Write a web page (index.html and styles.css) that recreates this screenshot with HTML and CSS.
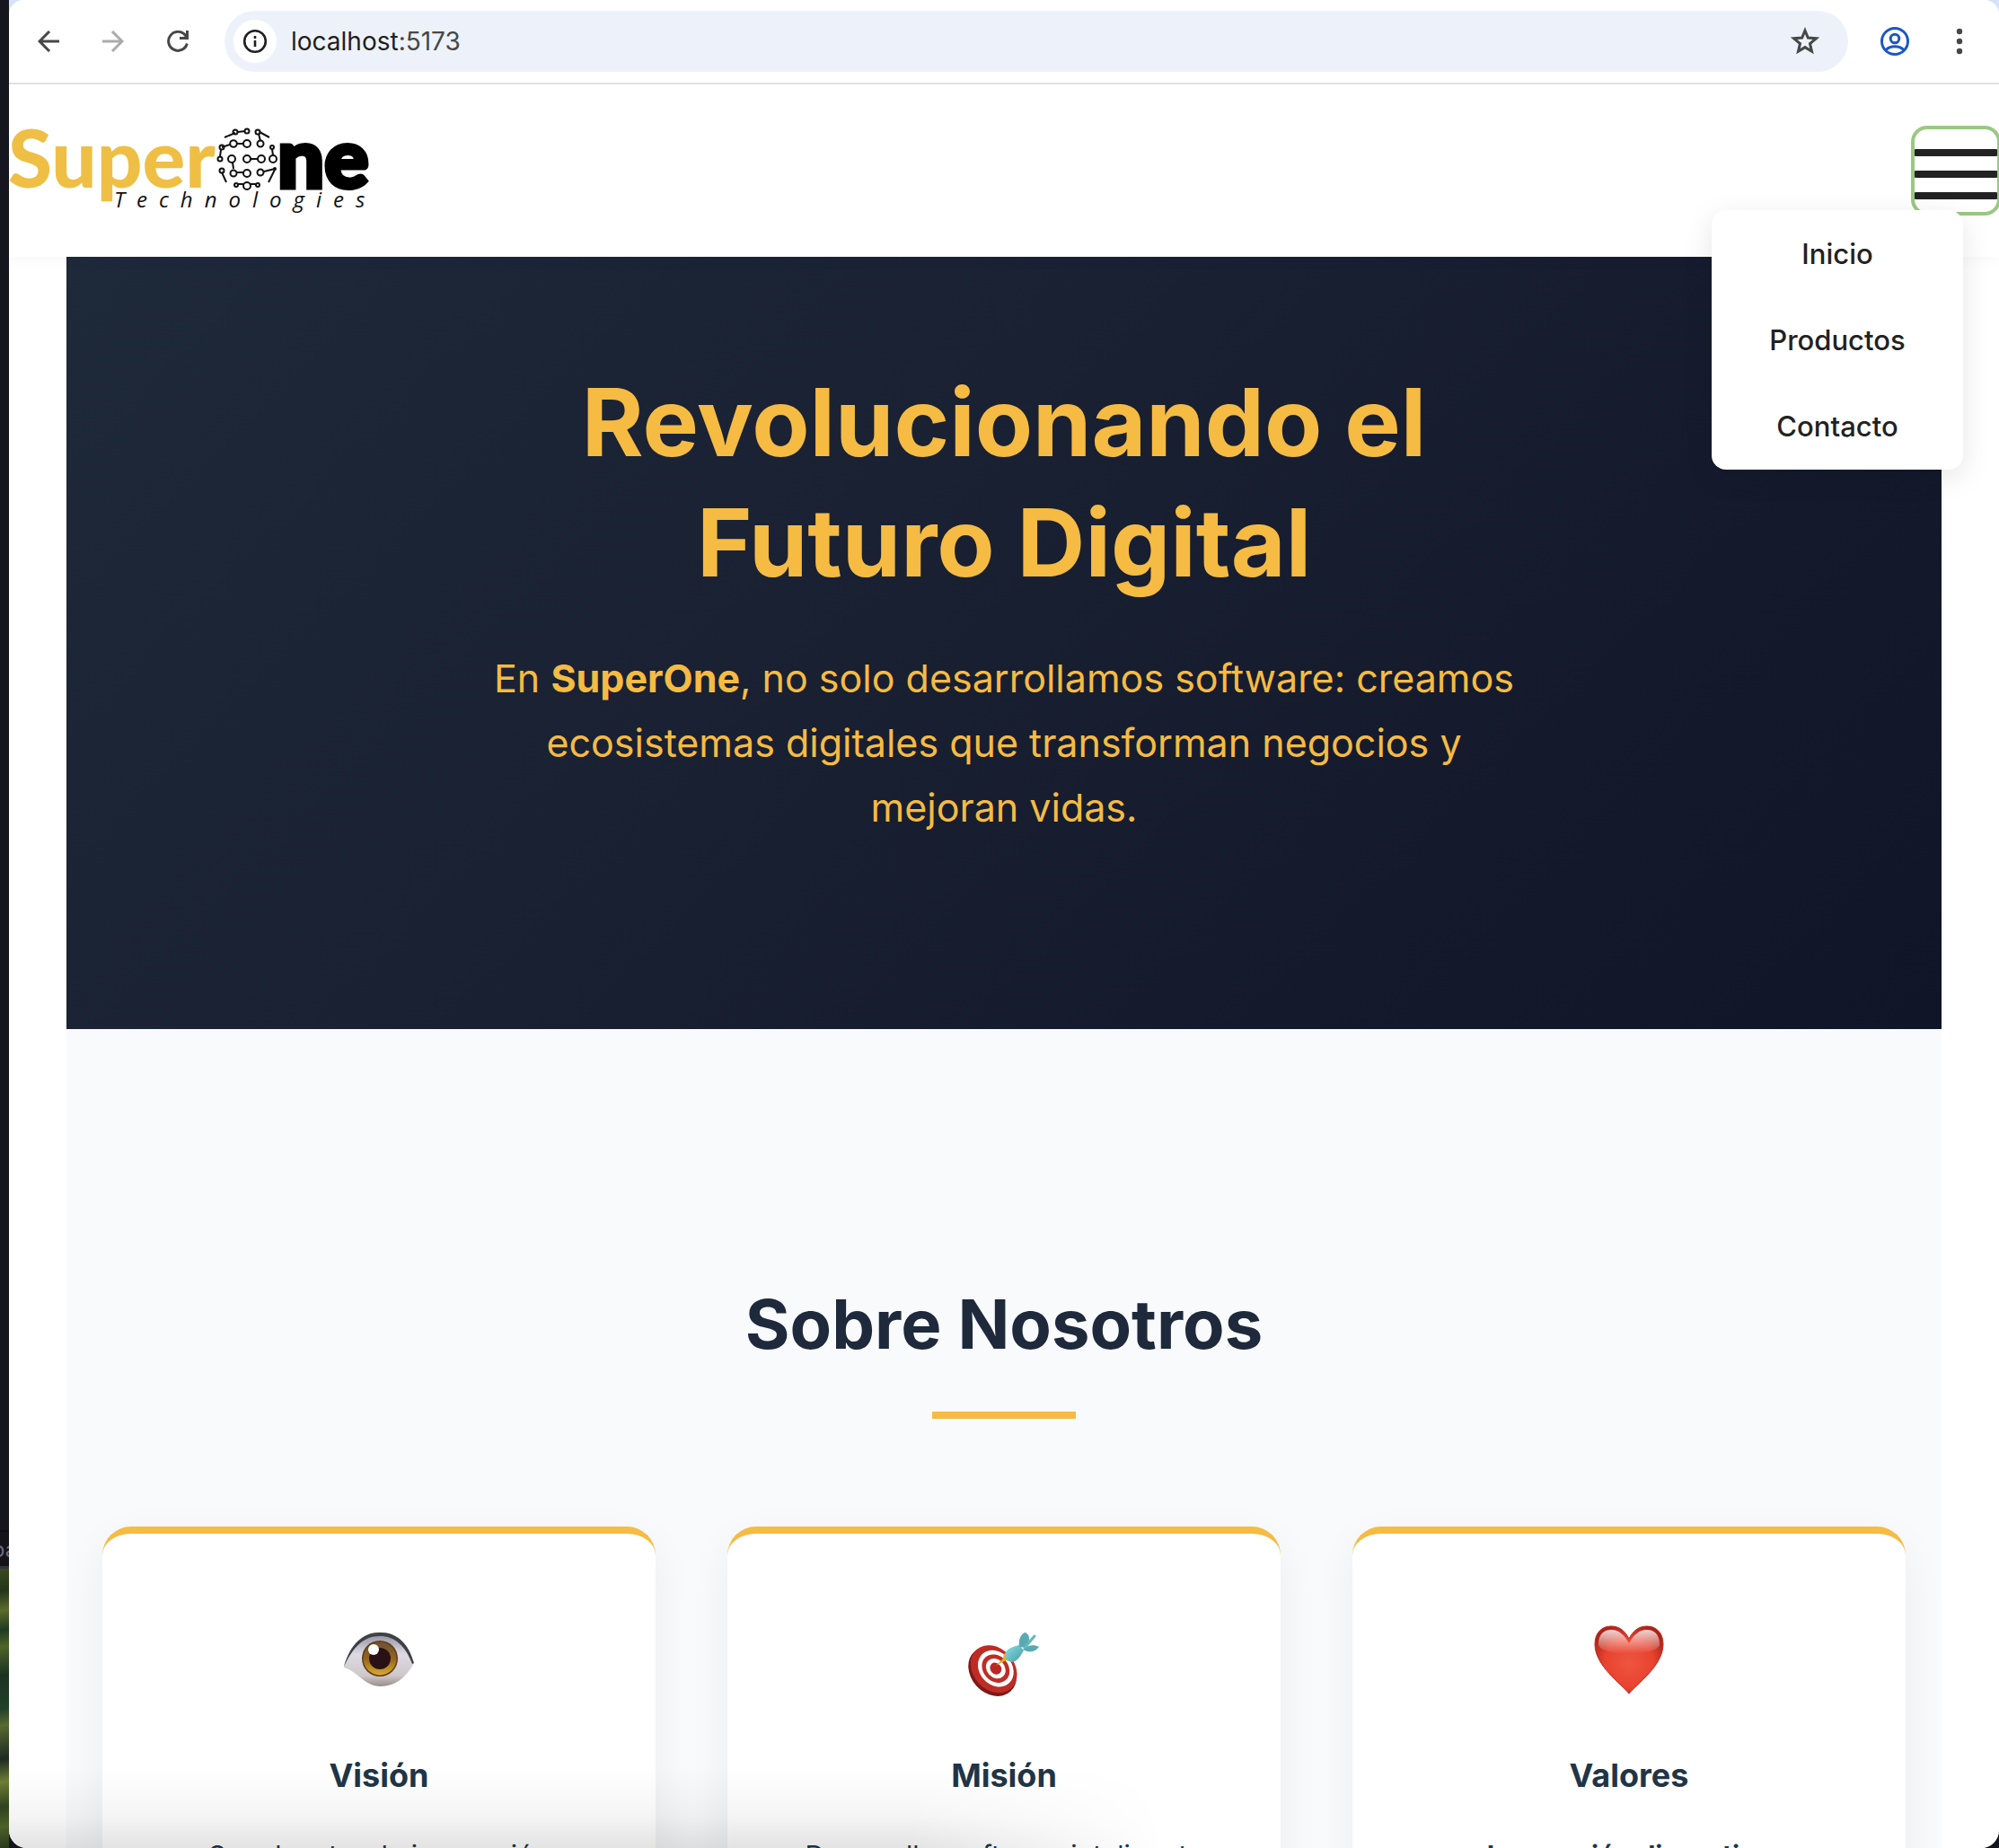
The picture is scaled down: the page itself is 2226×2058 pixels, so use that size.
FILE: index.html
```html
<!DOCTYPE html>
<html lang="es">
<head>
<meta charset="utf-8">
<title>SuperOne Technologies</title>
<link rel="stylesheet" href="styles.css">
</head>
<body>
<div class="desktop">
  <aside class="behind">
    <div class="behind-editor"></div>
    <div class="behind-tab"><span>pa</span></div>
    <div class="behind-photo"></div>
  </aside>
  <div class="window">
    <div class="toolbar">
      <button class="tool" type="button" aria-label="Atrás">
        <svg width="24" height="24" viewBox="0 0 24 24" fill="none" stroke="#474747" stroke-width="3"><path d="M24 12H2M13 1 2 12l11 11"/></svg>
      </button>
      <button class="tool" type="button" aria-label="Adelante">
        <svg width="24" height="24" viewBox="0 0 24 24" fill="none" stroke="#ababab" stroke-width="3"><path d="M0 12h22M11 1l11 11-11 11"/></svg>
      </button>
      <button class="tool" type="button" aria-label="Recargar">
        <svg width="24" height="24" viewBox="0 0 24 24" fill="none" stroke="#474747" stroke-width="3"><path d="M22.300 14.500A10.500 10.500 0 1 1 20.500 5.500L22.500 8.500M22.500 0v9M14 8.500h10"/></svg>
      </button>
      <div class="omnibox">
        <button class="site-info" type="button" aria-label="Información del sitio">
          <svg width="28" height="28" viewBox="0 0 28 28" fill="none" stroke="#1f1f1f" stroke-width="2.600"><circle cx="14" cy="14" r="11.800"/><path d="M14 13v7M14 8v3"/></svg>
        </button>
        <span class="address">localhost<span class="port">:5173</span></span>
        <button class="bookmark" type="button" aria-label="Añadir a marcadores">
          <svg width="32" height="32" viewBox="0 0 32 32" fill="none" stroke="#474747" stroke-width="3"><path d="M16 4l3.300 8 9 .8-6.800 5.700 2 8.700-7.500-4.600-7.500 4.600 2-8.700-6.800-5.700 9-.8z"/></svg>
        </button>
      </div>
      <button class="tool" type="button" aria-label="Perfil">
        <svg width="32" height="32" viewBox="0 0 32 32" fill="none" stroke="#1b57c4" stroke-width="3"><circle cx="16" cy="16" r="14.500"/><circle cx="16" cy="13" r="4.800"/><path d="M6 25.500c5.500-5 14.500-5 20 0"/></svg>
      </button>
      <button class="tool" type="button" aria-label="Menú del navegador">
        <svg width="8" height="32" viewBox="0 0 8 32" fill="#474747"><circle cx="4" cy="5" r="3.200"/><circle cx="4" cy="16" r="3.200"/><circle cx="4" cy="27" r="3.200"/></svg>
      </button>
    </div>

    <div class="page">
      <header class="site-header">
        <a class="brand" href="#inicio" aria-label="SuperOne Technologies">
          <svg width="404" height="104" viewBox="0 0 404 104">
            <text class="logo-super" x="-1" y="71">Super</text>
            <text class="logo-ne" x="299" y="71">ne</text>
            <text class="logo-tech" x="117" y="93">Technologies</text>
            <g fill="none" stroke="#111" stroke-width="2" transform="translate(0 -2)">
              <path d="M240 17l12-5M255 11l8-1M279 11l11 6M278 13l2 8M237 28l9-3M254 24h7M293 30l1 7M236 31l-1 7M269 41h8M249 45l1 7M254 56h7M237 56l5 11M284 55l12-3M296 53l-7 14M255 69h6M269 69h6"/>
              <circle cx="252" cy="11" r="2.500"/><circle cx="265" cy="10" r="2.500"/><circle cx="277" cy="11" r="2.500"/>
              <circle cx="250" cy="24" r="3.800"/><circle cx="265" cy="24" r="4"/><circle cx="280" cy="24" r="3.500"/>
              <circle cx="237" cy="28" r="2.500"/><circle cx="293" cy="28" r="2"/>
              <circle cx="235" cy="41" r="2.500"/><circle cx="248" cy="41" r="4"/><circle cx="265" cy="41" r="4"/><circle cx="281" cy="41" r="4"/><circle cx="294" cy="41" r="4"/>
              <circle cx="237" cy="54" r="2.500"/><circle cx="250" cy="57" r="3.500"/><circle cx="265" cy="57" r="4"/><circle cx="280" cy="56" r="3.500"/><circle cx="296" cy="52" r="1"/>
              <circle cx="253" cy="70" r="2"/><circle cx="265" cy="71" r="4"/><circle cx="277" cy="70" r="2"/>
            </g>
          </svg>
        </a>
        <button class="burger" type="button" aria-label="Abrir menú" aria-expanded="true">
          <span></span><span></span><span></span>
        </button>
        <nav class="menu">
          <a href="#inicio">Inicio</a>
          <a href="#productos">Productos</a>
          <a href="#contacto">Contacto</a>
        </nav>
      </header>

      <main class="content">
        <section class="hero" id="inicio">
          <h1>Revolucionando el Futuro Digital</h1>
          <p>En <strong>SuperOne</strong>, no solo desarrollamos software: creamos ecosistemas digitales que transforman negocios y mejoran vidas.</p>
        </section>
        <section class="about">
          <h2>Sobre Nosotros</h2>
          <div class="cards">
            <article class="card">
              <svg class="card-icon" width="80" height="80" viewBox="0 0 80 80">
                <defs>
                  <linearGradient id="sclera" x1="0" y1="0" x2="0" y2="1"><stop offset="0" stop-color="#8d8a9c"/><stop offset=".4" stop-color="#dedae4"/><stop offset=".8" stop-color="#cfc8ca"/><stop offset="1" stop-color="#978c8c"/></linearGradient>
                  <linearGradient id="iris" x1="0" y1="0" x2="0" y2="1"><stop offset="0" stop-color="#705035"/><stop offset=".5" stop-color="#94631d"/><stop offset="1" stop-color="#d9ac2c"/></linearGradient>
                </defs>
                <path d="M1 46C8 24 20 9 41 9c20 0 32 13 38 34-9 17-22 26-37 26C24 69 16 52 1 48z" fill="url(#sclera)"/>
                <path d="M1 47C8 22 22 9 41 9c20 0 32 13 38 34l-2 1C69 23 57 13 41 13 22 13 11 26 1 47z" fill="#3f4244"/>
                <circle cx="41" cy="38" r="20" fill="#5f3d16"/><circle cx="41" cy="38" r="18.500" fill="url(#iris)"/>
                <circle cx="41" cy="38" r="12" fill="#2a1115"/><circle cx="34" cy="28" r="6" fill="#fff"/>
              </svg>
              <h3>Visión</h3>
              <p>Ser el motor de innovación</p>
            </article>
            <article class="card">
              <svg class="card-icon" width="80" height="80" viewBox="0 0 80 80">
                <defs><linearGradient id="dart" x1="0" y1="0" x2="1" y2="1"><stop offset="0" stop-color="#8fe0e6"/><stop offset="1" stop-color="#3f9aa5"/></linearGradient></defs>
                <g transform="rotate(48 28 49)">
                  <ellipse cx="30" cy="52" rx="30" ry="24" fill="#7d1a17"/>
                  <ellipse cx="29" cy="49" rx="29" ry="23" fill="#bf2c26"/>
                  <ellipse cx="30" cy="47" rx="22" ry="18" fill="#fff"/>
                  <ellipse cx="30" cy="47" rx="17" ry="14" fill="#bf2c26"/>
                  <ellipse cx="30" cy="47" rx="12" ry="10" fill="#fff"/>
                  <ellipse cx="30" cy="47" rx="7" ry="6" fill="#b92823"/>
                </g>
                <path d="M31 46l8-8 1-6 4 4 4 5-6-1z" fill="#e0b326"/>
                <path d="M41 33c2-6 8-8 16-10l5 6c-4 7-8 13-14 13-4-1-7-5-7-9z" fill="url(#dart)"/>
                <path d="M57 25c-1-9 2-15 7-16 6 4 5 10 0 17zM61 28c5-5 12-6 18-3-4 6-11 7-18 3z" fill="#58aab2"/>
                <path d="M63 26L74 13" stroke="#65b6bd" stroke-width="3" stroke-linecap="round"/>
              </svg>
              <h3>Misión</h3>
              <p>Desarrollar software inteligente</p>
            </article>
            <article class="card">
              <svg class="card-icon" width="80" height="80" viewBox="0 0 80 80">
                <defs>
                  <radialGradient id="heart" cx=".5" cy=".55" r=".6"><stop offset="0" stop-color="#ee5540"/><stop offset=".6" stop-color="#e8432f"/><stop offset="1" stop-color="#a9231a"/></radialGradient>
                  <linearGradient id="shine" x1="0" y1="0" x2="0" y2="1"><stop offset="0" stop-color="#fff" stop-opacity=".8"/><stop offset="1" stop-color="#fff" stop-opacity="0"/></linearGradient>
                </defs>
                <path d="M40 77C31 66 2 46 2 22 2 9 10 2 20 2c10 0 16 6 20 14C44 8 50 2 60 2c10 0 18 7 18 20 0 24-29 44-38 55z" fill="url(#heart)" stroke="#c3281c" stroke-width="1"/>
                <path d="M6 22C6 10 13 6 20 6c9 0 15 6 20 15C45 12 51 6 60 6c7 0 14 4 14 16 0 14-68 14-68 0z" fill="url(#shine)"/>
              </svg>
              <h3>Valores</h3>
              <p><strong>Innovación disruptiva</strong></p>
            </article>
          </div>
        </section>
      </main>
    </div>
    <div class="status-shade"></div>
  </div>
</div>
</body>
</html>
```
FILE: styles.css
```css
* { box-sizing: border-box; }
body { margin: 0; background: #14141e; font-family: Inter, "Liberation Sans", sans-serif; color: #213547; }
button { padding: 0; border: 0; background: none; }
svg { display: block; }
h1, h2, h3, p { margin: 0; }

.desktop { display: flex; height: 100vh; overflow: hidden; }

/* Windows that show past the left edge of the browser */
.behind { display: flex; flex-direction: column; flex: 0 0 10px; overflow: hidden; }
.behind-editor { flex: 1; background: #16161f; }
.behind-tab { display: flex; justify-content: center; height: 43px; border-top: 2px solid #0c0c12; border-bottom: 3px solid #33333d; background: #141318; overflow: hidden; }
.behind-tab span { font-size: 24px; line-height: 40px; color: #6a6a88; }
.behind-photo { height: 311px; background: linear-gradient(170deg, #3c4a1e 0, #22351b 8%, #5c6a2b 15%, #1f3a22 22%, #4f6328 28%, #1b3220 38%, #22402a 50%, #566a30 56%, #1c2a22 68%, #6d7c35 76%, #2f4220 85%, #4d5f2a 92%, #28381d 100%); }

.window { position: relative; flex: 1; min-width: 0; display: flex; flex-direction: column; overflow: hidden; border-radius: 0 0 20px 20px; background: #d5e2fb; }

.toolbar { flex: none; display: flex; align-items: center; height: 94px; padding: 0 40px 0 32px; border-bottom: 2px solid #e0e0e0; border-radius: 16px 16px 0 0; background: #fff; }
.tool { display: flex; justify-content: center; flex: none; width: 24px; margin-right: 48px; }
.omnibox { flex: 1; display: flex; align-items: center; height: 68px; margin-right: 36px; margin-left: -8px; padding: 0 32px 0 10px; border-radius: 34px; background: #edf2fa; }
.site-info { display: flex; align-items: center; justify-content: center; width: 48px; height: 48px; border-radius: 24px; background: #fff; }
.address { flex: 1; margin-left: 16px; font-size: 28px; color: #1f1f1f; }
.port { color: #474747; }
.omnibox ~ .tool { width: 32px; }
.omnibox ~ .tool:last-child { width: 8px; margin: 0 0 0 4px; }

.page { flex: 1; min-height: 0; overflow: hidden; background: #fff; }
.site-header { position: relative; z-index: 1; display: flex; align-items: center; justify-content: space-between; height: 192px; background: #fff; box-shadow: 0 4px 16px rgba(0, 0, 0, .03); }
.logo-super { font: 900 89px Lato, sans-serif; fill: #efbf45; }
.logo-ne { font: 900 92px Lato, sans-serif; fill: #000; stroke: #000; stroke-width: 5px; }
.logo-tech { font: italic 400 24px "Open Sans", sans-serif; letter-spacing: 13px; fill: #111; }
.burger { display: flex; flex-direction: column; justify-content: center; gap: 16px; width: 96px; height: 96px; padding: 8px 0 0; border-radius: 16px; outline: 4px solid #9bc783; outline-offset: -2px; }
.burger span { height: 8px; border-radius: 4px; background: #222; }

.menu { position: absolute; top: 140px; right: 40px; display: flex; flex-direction: column; width: 280px; padding-top: 1px; border-radius: 16px; background: #fff; box-shadow: 0 8px 32px rgba(0, 0, 0, .1); }
.menu a { font-size: 31px; font-weight: 500; line-height: 96px; text-align: center; text-decoration: none; color: #222; }

.content { margin: 0 64px; }
.hero { display: flex; flex-direction: column; align-items: center; gap: 48px; padding: 117px 64px 211px; background: linear-gradient(135deg, #1e293a, #181f30 50%, #101528); color: #f5bb43; text-align: center; }
.hero h1 { max-width: 1080px; font-size: 105px; line-height: 134px; }
.hero p { max-width: 1160px; font-size: 43px; line-height: 72px; }
.about { padding: 279px 40px 160px; background: #f8fafc; }
.about h2 { display: flex; flex-direction: column; align-items: center; gap: 49px; font-size: 76px; line-height: 98px; color: #1e293b; }
.about h2::after { content: ""; width: 160px; height: 8px; background: #f5bb43; }
.cards { display: grid; grid-template-columns: repeat(3, 1fr); gap: 80px; margin-top: 120px; }
.card { display: flex; flex-direction: column; align-items: center; padding: 101px 64px; border-top: 8px solid #f5bb43; border-radius: 32px; background: #fff; box-shadow: 0 16px 48px rgba(0, 0, 0, .06); text-align: center; }
.card h3 { margin: 64px 0 39px; font-size: 36px; line-height: 48px; color: #213547; }
.card p { font-size: 30px; line-height: 52px; color: #213547; }

/* Soft shade that rises from the lower edge of the window */
.status-shade { position: absolute; left: 0; bottom: 0; width: 58%; height: 90px; background: linear-gradient(to top, rgba(0, 0, 0, .11), rgba(0, 0, 0, .04) 40%, rgba(0, 0, 0, 0)); mask-image: linear-gradient(to right, #000 78%, transparent); pointer-events: none; }
```
